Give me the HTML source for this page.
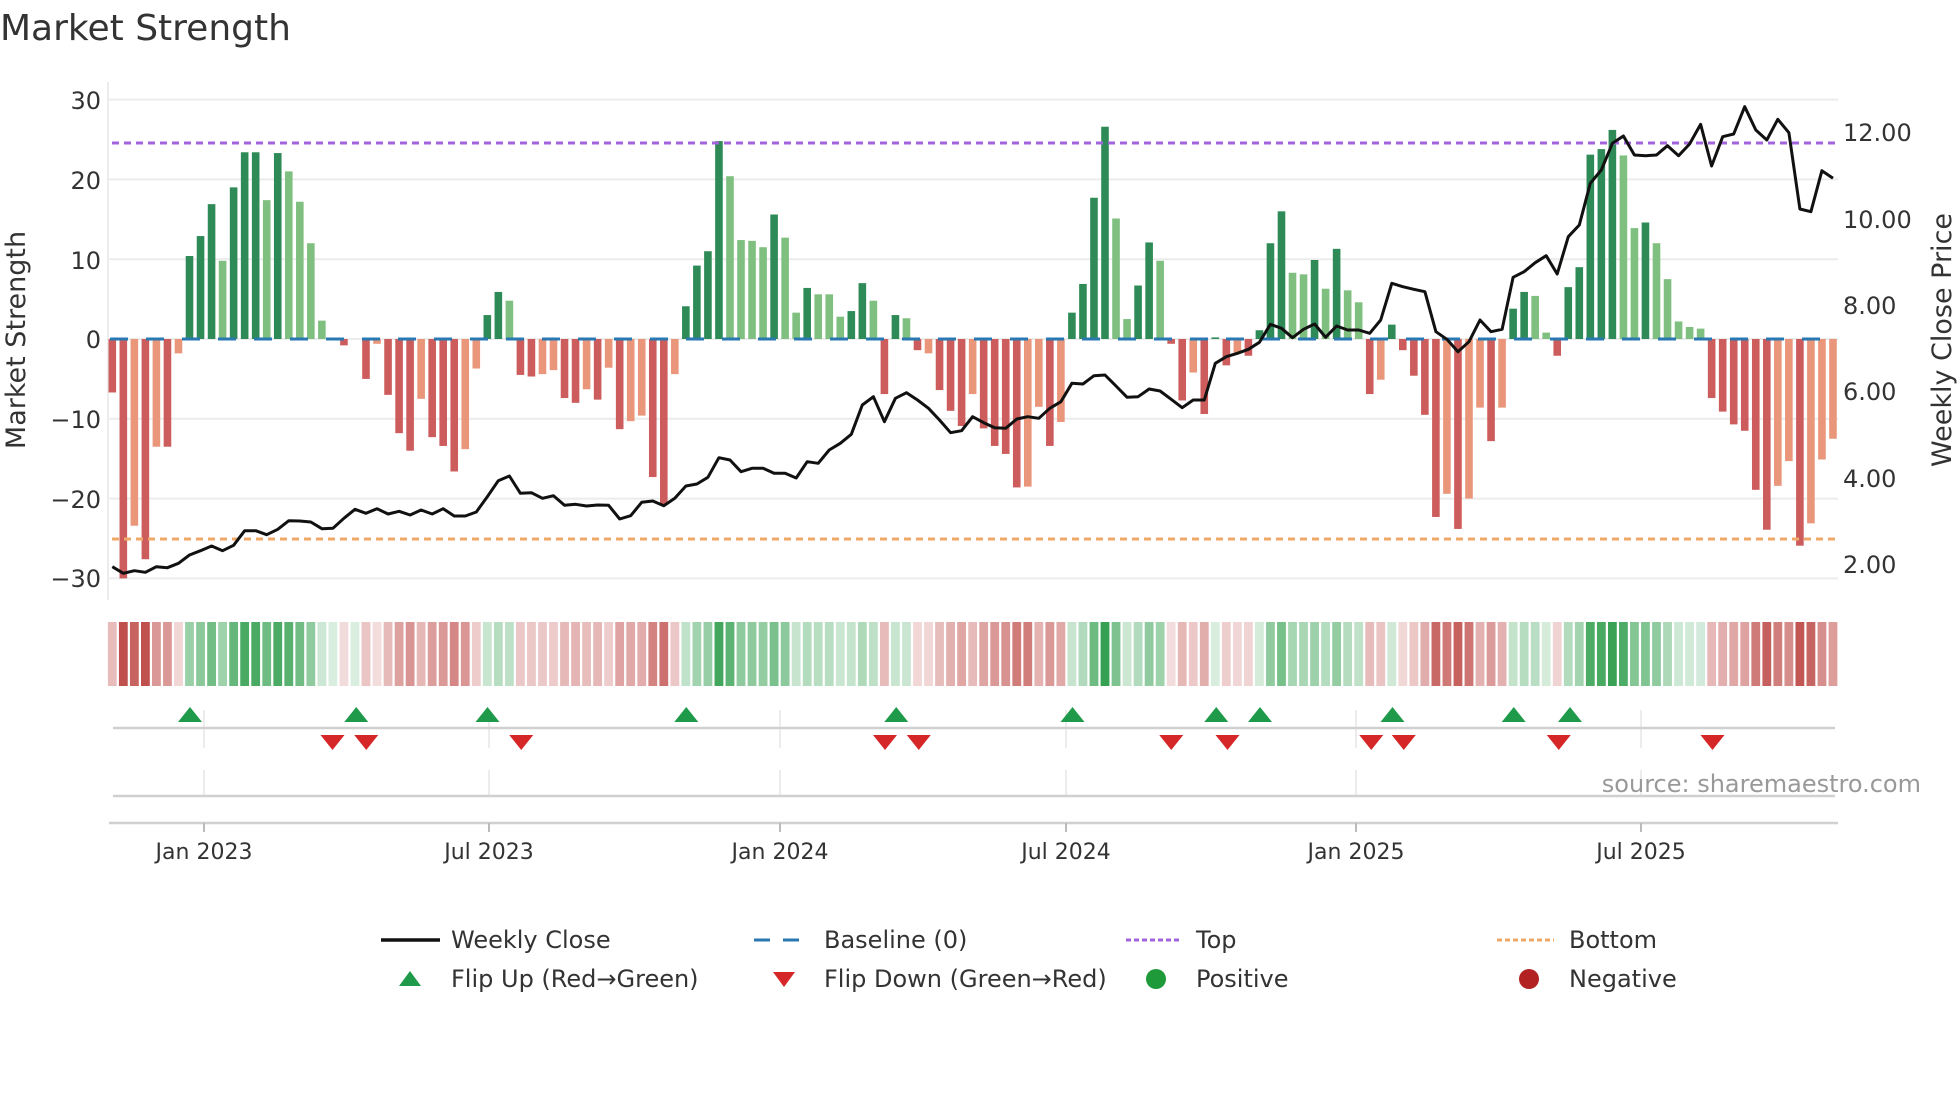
<!DOCTYPE html>
<html><head><meta charset="utf-8"><style>
html,body{margin:0;padding:0;background:#fff;}
svg{display:block;font-family:"DejaVu Sans","Liberation Sans",sans-serif;}
</style></head><body>
<svg id="c" width="1960" height="1102" viewBox="0 0 1960 1102" xmlns="http://www.w3.org/2000/svg">
<rect width="1960" height="1102" fill="#fff"/>
<text x="0" y="40" font-size="36" fill="#333">Market Strength</text>
<g id="grid" stroke="#ececec" stroke-width="2"></g>
<line x1="108" y1="82" x2="108" y2="600" stroke="#ececec" stroke-width="2"/>
<g font-size="24" fill="#333" text-anchor="end">
<text x="101" y="109">30</text><text x="101" y="189">20</text><text x="101" y="269">10</text>
<text x="101" y="348">0</text><text x="101" y="428">−10</text><text x="101" y="508">−20</text><text x="101" y="587">−30</text>
</g>
<g font-size="24" fill="#333">
<text x="1843" y="141">12.00</text><text x="1843" y="228">10.00</text><text x="1843" y="314">8.00</text>
<text x="1843" y="400">6.00</text><text x="1843" y="487">4.00</text><text x="1843" y="573">2.00</text>
</g>
<text transform="translate(25,340) rotate(-90)" font-size="27" fill="#333" text-anchor="middle">Market Strength</text>
<text transform="translate(1951,340) rotate(-90)" font-size="27" fill="#333" text-anchor="middle">Weekly Close Price</text>
<g id="bars"></g>
<line x1="110" y1="339" x2="1838" y2="339" stroke="#2a78b2" stroke-width="3" stroke-dasharray="18 18"/>
<line x1="112" y1="143" x2="1838" y2="143" stroke="#a264dc" stroke-width="3" stroke-dasharray="7 5"/>
<line x1="112" y1="539" x2="1838" y2="539" stroke="#f0a868" stroke-width="3" stroke-dasharray="7 5"/>
<polyline id="price" fill="none" stroke="#111" stroke-width="3" stroke-linejoin="round"/>
<g id="heat"></g>
<g stroke="#ececec" stroke-width="2">
<line x1="204" y1="710" x2="204" y2="748"/><line x1="489" y1="710" x2="489" y2="748"/><line x1="780" y1="710" x2="780" y2="748"/><line x1="1066" y1="710" x2="1066" y2="748"/><line x1="1356" y1="710" x2="1356" y2="748"/><line x1="1641" y1="710" x2="1641" y2="748"/>
<line x1="204" y1="770" x2="204" y2="797"/><line x1="489" y1="770" x2="489" y2="797"/><line x1="780" y1="770" x2="780" y2="797"/><line x1="1066" y1="770" x2="1066" y2="797"/><line x1="1356" y1="770" x2="1356" y2="797"/><line x1="1641" y1="770" x2="1641" y2="797"/>
</g>
<line x1="113" y1="728" x2="1835" y2="728" stroke="#d0d0d0" stroke-width="2.5"/>
<line x1="113" y1="796" x2="1835" y2="796" stroke="#d0d0d0" stroke-width="2.5"/>
<line x1="109" y1="823" x2="1838" y2="823" stroke="#d0d0d0" stroke-width="2.5"/>
<g stroke="#bbb" stroke-width="2">
<line x1="204" y1="823" x2="204" y2="832"/><line x1="489" y1="823" x2="489" y2="832"/><line x1="780" y1="823" x2="780" y2="832"/><line x1="1066" y1="823" x2="1066" y2="832"/><line x1="1356" y1="823" x2="1356" y2="832"/><line x1="1641" y1="823" x2="1641" y2="832"/>
</g>
<g id="flips"></g>
<g font-size="22" fill="#333" text-anchor="middle">
<text x="204" y="859">Jan 2023</text><text x="489" y="859">Jul 2023</text><text x="780" y="859">Jan 2024</text>
<text x="1066" y="859">Jul 2024</text><text x="1356" y="859">Jan 2025</text><text x="1641" y="859">Jul 2025</text>
</g>
<text x="1921" y="792" font-size="24" fill="#999" text-anchor="end">source: sharemaestro.com</text>
<g font-size="24" fill="#333">
<line x1="381" y1="940" x2="440" y2="940" stroke="#111" stroke-width="3.5"/>
<text x="451" y="948">Weekly Close</text>
<line x1="754" y1="940" x2="808" y2="940" stroke="#2a78b2" stroke-width="3" stroke-dasharray="16 13"/>
<text x="824" y="948">Baseline (0)</text>
<line x1="1126" y1="940" x2="1181" y2="940" stroke="#a264dc" stroke-width="3" stroke-dasharray="5 3"/>
<text x="1196" y="948">Top</text>
<line x1="1497" y1="940" x2="1554" y2="940" stroke="#f0a868" stroke-width="3" stroke-dasharray="5 3"/>
<text x="1569" y="948">Bottom</text>
<polygon points="399,986 421,986 410,971" fill="#1e9a4a"/>
<text x="451" y="987">Flip Up (Red→Green)</text>
<polygon points="773,972 795,972 784,987" fill="#d62728"/>
<text x="824" y="987">Flip Down (Green→Red)</text>
<circle cx="1156" cy="979" r="10" fill="#1e9a3a"/>
<text x="1196" y="987">Positive</text>
<circle cx="1529" cy="979" r="10" fill="#b22222"/>
<text x="1569" y="987">Negative</text>
</g>
</svg>
<script>
(function(){
var NS="http://www.w3.org/2000/svg";
function el(t,a,p){var e=document.createElementNS(NS,t);for(var k in a)e.setAttribute(k,a[k]);p.appendChild(e);return e;}
var g=document.getElementById('grid');
[30,20,10,0,-10,-20,-30].forEach(function(v){var y=339-v*7.98;el('line',{x1:108,x2:1838,y1:y,y2:y},g);});
var s="-6.7R,-30R,-23.4S,-27.6R,-13.5S,-13.5R,-1.8S,10.4D,12.9D,16.9D,9.8L,19D,23.4D,23.4D,17.4L,23.3D,21L,17.2L,12L,2.3L,0R,-0.8R,0R,-5R,-0.6S,-7R,-11.8R,-14R,-7.5S,-12.3R,-13.4R,-16.6R,-13.8S,-3.7S,3D,5.9D,4.8L,-4.5R,-4.7R,-4.4S,-3.9S,-7.4R,-8R,-6.3S,-7.6R,-3.6S,-11.3R,-10.3S,-9.6S,-17.3R,-20.7R,-4.4S,4.1D,9.2D,11D,24.8D,20.4L,12.4L,12.3L,11.5L,15.6D,12.7L,3.3L,6.4D,5.6L,5.6L,2.8L,3.5D,7D,4.8L,-6.9R,3D,2.6L,-1.4R,-1.8S,-6.4R,-9R,-10.9R,-6.9S,-11.2R,-13.4R,-14.4R,-18.6R,-18.5S,-8.5S,-13.4R,-10.4S,3.3D,6.9D,17.7D,26.6D,15.1L,2.5L,6.7D,12.1D,9.8L,-0.6R,-7.7R,-4.2S,-9.4R,0.2D,-3.3R,-1.7S,-2.1R,1.1D,12D,16D,8.3L,8.1L,9.9D,6.3L,11.3D,6.1L,4.6L,-6.9R,-5.1S,1.8D,-1.4R,-4.6R,-9.5R,-22.3R,-19.4S,-23.8R,-20S,-8.6S,-12.8R,-8.6S,3.8D,5.9D,5.4L,0.8L,-2.1R,6.5D,9D,23.1D,23.8D,26.2D,23L,13.9L,14.6D,12L,7.5L,2.2L,1.5L,1.3L,-7.4R,-9.1R,-10.7R,-11.5R,-18.9R,-23.9R,-18.4S,-15.3S,-25.9R,-23.1S,-15.1S,-12.5S".split(',');
var col={D:'#2e8b57',L:'#7fbf7f',R:'#cd5c5c',S:'#e9967a'};
var bg=document.getElementById('bars'),hg=document.getElementById('heat');
function X(i){return 112.3+i*11.03;}
s.forEach(function(t,i){
 var v=parseFloat(t),c=t.slice(-1),x=X(i);
 if(Math.abs(v)>0.05){var h=Math.abs(v)*7.98;el('rect',{x:x-3.8,width:7.6,y:v>0?339-h:339,height:h,fill:col[c]},bg);}
 var a=Math.min(1,0.18+0.82*Math.abs(v)/27);
 var base=v>=0?[52,160,80]:[192,80,77];
 var r=Math.round(255+(base[0]-255)*a),gg=Math.round(255+(base[1]-255)*a),b=Math.round(255+(base[2]-255)*a);
 el('rect',{x:x-4.4,width:8.8,y:622,height:64,fill:'rgb('+r+','+gg+','+b+')'},hg);
});
var py=[1430,1450,1442,1447,1430,1433,1420,1395,1382,1368,1382,1366,1322,1322,1334,1318,1292,1293,1296,1316,1315,1285,1258,1270,1256,1272,1264,1275,1260,1272,1256,1278,1278,1266,1220,1172,1158,1210,1208,1225,1217,1246,1243,
1248,1245,1246,1287,1277,1237,1233,1247,1225,1188,1182,1162,1103,1110,1145,1135,1135,1150,1150,1164,1115,1120,1080,1060,1033,945,920,995,925,908,930,955,990,1028,1022,980,998,1013,1015,987,980,985,
955,935,880,882,857,855,888,922,920,897,903,928,953,930,930,820,800,790,778,757,703,715,743,718,702,742,708,720,720,730,690,580,590,598,605,725,748,785,755,690,725,
718,562,545,518,497,552,440,405,280,240,160,138,195,197,195,167,197,162,103,228,140,132,50,120,150,88,128,357,365,242,265];
document.getElementById('price').setAttribute('points',py.map(function(y,i){return X(i).toFixed(1)+','+(90+y/3).toFixed(1);}).join(' '));
var fg=document.getElementById('flips');
[152,285,390,549,717,858,973,1008,1114,1211,1256].forEach(function(d){var x=d*1.25;el('polygon',{points:(x-12)+',722 '+(x+12)+',722 '+x+',707',fill:'#1e9a4a'},fg);});
[266,293,417,708,735,937,982,1097,1123,1247,1370].forEach(function(d){var x=d*1.25;el('polygon',{points:(x-12)+',735 '+(x+12)+',735 '+x+',750',fill:'#d62728'},fg);});
})();
</script>
</body></html>
